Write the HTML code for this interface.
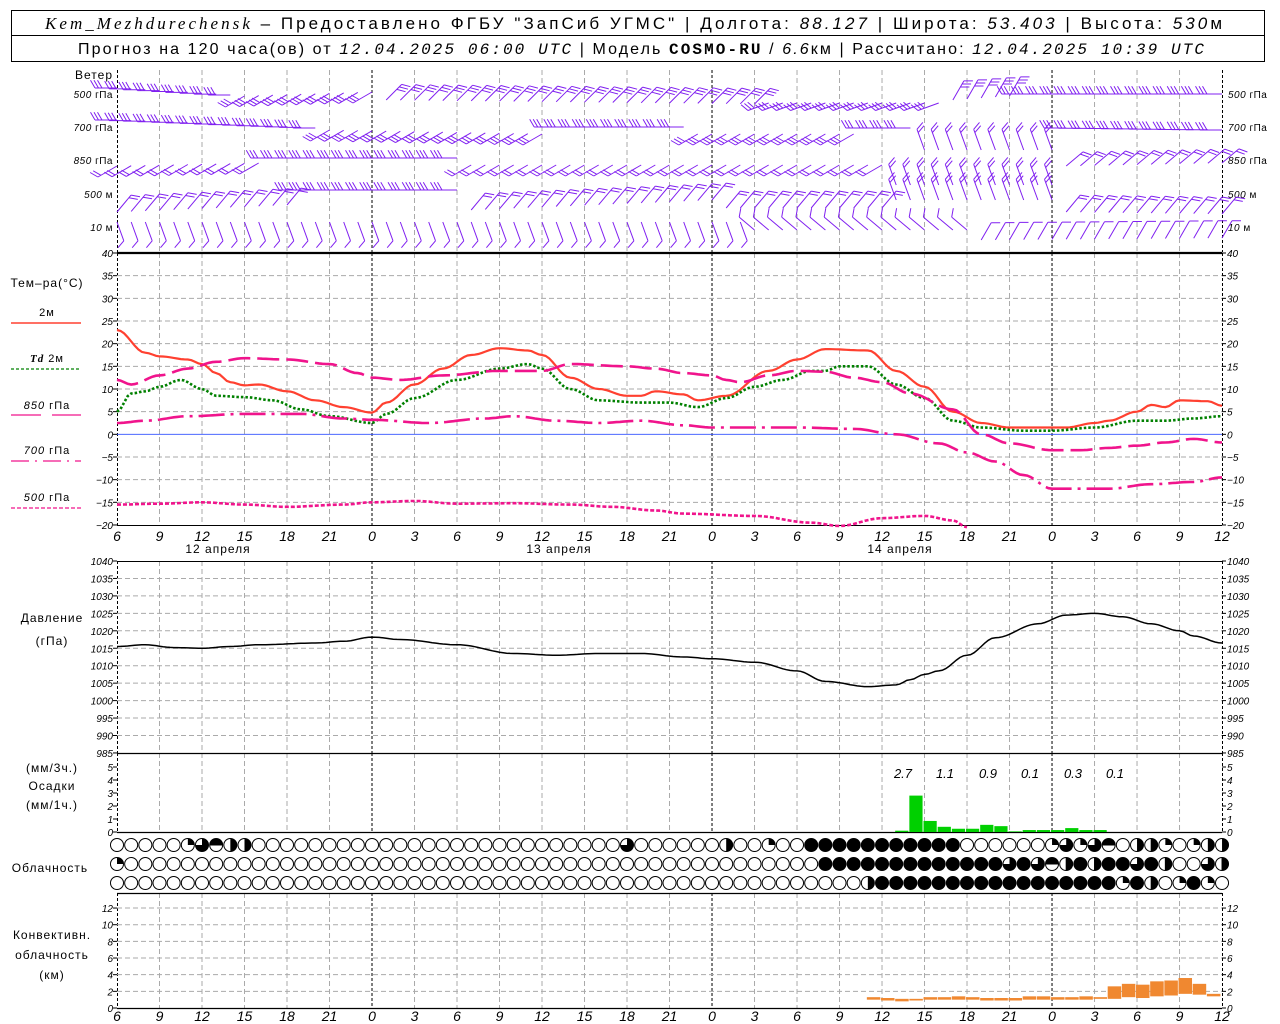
<!DOCTYPE html>
<html><head><meta charset="utf-8"><style>
html,body{margin:0;padding:0;background:#fff;width:1280px;height:1024px;overflow:hidden}
svg{display:block}
text{font-family:"Liberation Sans",sans-serif}
.it{font-style:italic;font-size:10px}
.lb{font-size:12px;letter-spacing:1px}
</style></head><body>
<svg id="s" width="1280" height="1024" xmlns="http://www.w3.org/2000/svg">
<rect x="11.5" y="10.5" width="1253" height="51" fill="none" stroke="#000"/>
<line x1="11" y1="35.5" x2="1265" y2="35.5" stroke="#000"/>
<text x="45" y="29" font-size="17" textLength="1177" lengthAdjust="spacing"><tspan font-family="Liberation Serif" font-style="italic">Kem_Mezhdurechensk</tspan> – Предоставлено ФГБУ "ЗапСиб УГМС" | Долгота: <tspan font-style="italic">88.127</tspan> | Широта: <tspan font-style="italic">53.403</tspan> | Высота: <tspan font-style="italic">530</tspan>м</text>
<text x="78" y="54" font-size="16" textLength="1126" lengthAdjust="spacing">Прогноз на 120 часа(ов) от <tspan font-family="Liberation Mono" font-style="italic">12.04.2025 06:00 UTC</tspan>  | Модель <tspan font-family="Liberation Mono" font-weight="bold">COSMO-RU</tspan> / <tspan font-style="italic">6.6</tspan>км | Рассчитано: <tspan font-family="Liberation Mono" font-style="italic">12.04.2025 10:39 UTC</tspan></text>
<g class="lb">
<text x="113" y="79" text-anchor="end">Ветер</text>
<text x="47" y="287" text-anchor="middle">Тем–ра(°C)</text>
<text x="47" y="316" text-anchor="middle" font-size="11">2м</text>
<text x="47" y="362" text-anchor="middle" font-size="11"><tspan font-style="italic" font-weight="bold" font-family="Liberation Serif">Td</tspan>  2м</text>
<text x="47" y="409" text-anchor="middle" font-size="11"><tspan font-style="italic">850</tspan> гПа</text>
<text x="47" y="454" text-anchor="middle" font-size="11"><tspan font-style="italic">700</tspan> гПа</text>
<text x="47" y="501" text-anchor="middle" font-size="11"><tspan font-style="italic">500</tspan> гПа</text>
<text x="52" y="622" text-anchor="middle">Давление</text>
<text x="52" y="645" text-anchor="middle">(гПа)</text>
<text x="52" y="772" text-anchor="middle">(мм/3ч.)</text>
<text x="52" y="790" text-anchor="middle">Осадки</text>
<text x="52" y="809" text-anchor="middle">(мм/1ч.)</text>
<text x="50" y="872" text-anchor="middle">Облачность</text>
<text x="52" y="939" text-anchor="middle">Конвективн.</text>
<text x="52" y="959" text-anchor="middle">облачность</text>
<text x="52" y="979" text-anchor="middle">(км)</text>
</g>
<line x1="11" y1="323" x2="81" y2="323" stroke="#ff4030" stroke-width="1.5"/>
<line x1="11" y1="369" x2="81" y2="369" stroke="#008000" stroke-width="1.2" stroke-dasharray="3,2"/>
<line x1="11" y1="415" x2="41" y2="415" stroke="#f0148c" stroke-width="1.2"/><line x1="52" y1="415" x2="81" y2="415" stroke="#f0148c" stroke-width="1.2"/>
<line x1="11" y1="461" x2="81" y2="461" stroke="#f0148c" stroke-width="1.2" stroke-dasharray="18,6,2,6"/>
<line x1="11" y1="508" x2="81" y2="508" stroke="#f0148c" stroke-width="1.2" stroke-dasharray="4,2"/>
<g id="g"></g>
</svg>
<script>
(function(){
var NS="http://www.w3.org/2000/svg",g=document.getElementById('g');
function X(h){return 117+h*14.167;}
function el(t,a,txt){var e=document.createElementNS(NS,t);for(var k in a)e.setAttribute(k,a[k]);if(txt!=null)e.textContent=txt;g.appendChild(e);return e;}
function ln(x1,y1,x2,y2,c,w,d){var a={x1:x1,y1:y1,x2:x2,y2:y2,stroke:c,'stroke-width':w||1};if(d)a['stroke-dasharray']=d;return el('line',a);}
function tx(x,y,s,anc,cls){return el('text',{x:x,y:y,'text-anchor':anc||'start','class':cls||'it'},s);}
var panels=[[70,252],[253,525],[561,753],[753,832],[893,1008]];
panels.forEach(function(p){
 for(var h=3;h<78;h+=3){var mid=(h==18||h==42||h==66);ln(X(h),p[0],X(h),p[1],mid?'#000':'#aaa',1,mid?'3,2':'5,3');}
 ln(117.5,p[0],117.5,p[1],'#000',1,'3,2');ln(1222.5,p[0],1222.5,p[1],'#000',1,'3,2');
});
function TY(t){return 253+(40-t)*4.533;}
for(var t=40;t>=-20;t-=5){var y=TY(t);
 if(t<40&&t>-20&&t!=0)ln(117,y,1222,y,'#aaa',1,'5,3');
 tx(113,y+4,String(t).replace('-','−'),'end');tx(1227,y+4,String(t).replace('-','−'));
 ln(113,y,117,y,'#000');ln(1222,y,1226,y,'#000');}
ln(117,TY(0),1222,TY(0),'#3050ff',0.8);
ln(117,253.5,1222,253.5,'#000',1.2);ln(117,525.5,1222,525.5,'#000',1);
function PY(p){return 561+(1040-p)*3.49;}
for(var p=1040;p>=985;p-=5){var y=PY(p);
 if(p<1040&&p>985)ln(117,y,1222,y,'#aaa',1,'5,3');
 tx(113,y+4,p,'end');tx(1227,y+4,p);ln(113,y,117,y,'#000');ln(1222,y,1226,y,'#000');}
ln(117,561.5,1222,561.5,'#000',1);ln(117,753.5,1222,753.5,'#000',1.2);
function RY(v){return 832-v*13;}
for(var v=0;v<=5;v++){var y=RY(v);tx(113,y+4,v,'end');tx(1227,y+4,v);ln(113,y,117,y,'#000');ln(1222,y,1226,y,'#000');}
ln(117,832.5,1222,832.5,'#000',1.2);
function CY(k){return 1008-k*8.33;}
for(var k=0;k<=12;k+=2){var y=CY(k);if(k>0)ln(117,y,1222,y,'#aaa',1,'5,3');
 tx(113,y+4,k,'end');tx(1227,y+4,k);ln(113,y,117,y,'#000');ln(1222,y,1226,y,'#000');}
ln(117,893.5,1222,893.5,'#000',1.2);ln(117,1008.5,1222,1008.5,'#000',1.2);
ln(117,252.5,1222,252.5,'#000',1.2);
var lab=[6,9,12,15,18,21,0,3];
for(var h=0;h<=78;h+=3){var s=lab[(h/3)%8];
 el('text',{x:X(h),y:541,'text-anchor':'middle','font-style':'italic','font-size':'14'},s);
 el('text',{x:X(h),y:1021,'text-anchor':'middle','font-style':'italic','font-size':'14'},s);}
[[218,'12 апреля'],[559,'13 апреля'],[900,'14 апреля']].forEach(function(d){el('text',{x:d[0],y:553,'text-anchor':'middle','font-size':'12','letter-spacing':'1'},d[1]);});
[['500 гПа',98],['700 гПа',131],['850 гПа',164],['500 м',198],['10   м',231]].forEach(function(w){
 var a=w[0].split(' ');
 var t1=el('text',{x:113,y:w[1],'text-anchor':'end','font-size':'10','letter-spacing':'0.5'});t1.innerHTML='<tspan font-style="italic">'+a[0]+'</tspan> '+w[0].slice(a[0].length+1);
 var t2=el('text',{x:1228,y:w[1],'font-size':'10','letter-spacing':'0.5'});t2.innerHTML='<tspan font-style="italic">'+a[0]+'</tspan> '+w[0].slice(a[0].length+1);
});
function interp(kf,h){for(var i=0;i<kf.length-1;i++){if(h>=kf[i][0]&&h<=kf[i+1][0]){var a=kf[i],b=kf[i+1],f=(h-a[0])/(b[0]-a[0]);f=(1-Math.cos(f*Math.PI))/2;return a[1]+(b[1]-a[1])*f;}}return null;}
function curve(kf,fy,c,w,d,h0,h1){var pts=[];for(var h=h0;h<=h1;h+=0.25){var v=interp(kf,h);if(v!=null)pts.push(X(h).toFixed(1)+','+fy(v).toFixed(1));}
 var a={points:pts.join(' '),fill:'none',stroke:c,'stroke-width':w};if(d)a['stroke-dasharray']=d;el('polyline',a);}
var MG='#f0148c';
curve([[0,23],[2,18],[3,17.2],[5,16.5],[6,15.5],[7,13.5],[8,11.5],[9,10.8],[10,11],[12,9.5],[14,7.5],[16,6],[18,4.8],[19,7],[21,11],[23,14.5],[25,17.5],[27,19],[29,18.5],[30,17.5],[32,12.5],[34,10],[36,8.5],[37,8.5],[38,9.5],[40,8.8],[41,7.5],[43,8.5],[46,14],[48,16.5],[50,18.8],[53,18.5],[55,14],[57,10.5],[59,5],[61,2.5],[63,1.5],[67,1.5],[69,2.5],[70,3],[72,5],[73,6.5],[74,6],[75,7.5],[77,7.3],[78,6.3]],TY,'#ff4030',2.2,null,0,78);
curve([[0,5],[1,9],[2,9.5],[3,10.5],[4.5,12],[6,10],[7,8.5],[9,8.2],[11,7.5],[13,5.5],[15,4],[18,2.5],[19,4.5],[21,8],[24,12],[27,14.5],[29,15.5],[30,14.5],[32,10],[34,7.5],[37,7],[39,7],[41,6],[43,8],[45,10.5],[47,12],[49,14],[50,14],[51,15],[53,15],[55,11],[57,8],[59,3],[61,1.5],[64,0.8],[66,0.8],[69,1.5],[72,3],[74,3],[76,3.5],[78,4]],TY,'#008000',2.6,'2.5,2',0,78);
curve([[0,12],[1,11],[3,13],[5,14.5],[7,16],[9,16.8],[12,16.5],[15,15.5],[17,13.5],[18,12.5],[20,12],[23,13],[27,14],[30,14],[32,15.5],[36,15],[38,14.5],[40,13.5],[42,13],[43,12],[44,11.5],[46,13],[48,14],[50,13.8],[52,12.5],[54,11.5],[56,9],[59,5.5],[61,0],[63,-2],[66,-3.5],[68,-3.5],[70,-3],[72,-2.5],[74,-1.8],[76,-1],[78,-1.8]],TY,MG,2.6,'22,7',0,78);
curve([[0,2.5],[2,3],[5,4],[9,4.5],[13,4.5],[16,3.5],[18,3.2],[22,2.5],[26,3.5],[28,4],[31,3],[34,2.5],[37,3],[40,2],[42,1.5],[48,1.5],[52,1.2],[55,0],[58,-2],[60,-4],[62,-6],[64,-9],[66,-12],[70,-12],[73,-11],[76,-10.5],[78,-9.5]],TY,MG,2.6,'26,6,3,6',0,78);
curve([[0,-15.5],[3,-15.3],[6,-15],[9,-15.5],[12,-16],[16,-15.5],[18,-15],[21,-14.7],[24,-15.3],[28,-15.2],[32,-15.5],[35,-16],[38,-16.8],[40,-17.5],[45,-18],[49,-19.5],[51,-20.2],[54,-18.5],[57,-18],[59,-19],[60,-20.5]],TY,MG,2.6,'4,2',0,60);
curve([[0,1015.5],[2,1016],[4,1015.2],[6,1015],[8,1015.5],[10,1016],[14,1016.5],[16,1017],[18,1018.2],[20,1017.5],[24,1016],[28,1013.5],[31,1013],[34,1013.5],[37,1013.5],[40,1012.5],[42,1012],[45,1011],[48,1008.5],[50,1005.5],[53,1004],[55,1004.5],[56,1006],[57,1007.5],[58,1008.5],[60,1013],[62,1018],[65,1022],[67,1024.5],[69,1025],[71,1024],[73,1022],[75,1020],[76,1018.5],[78,1016.5]],PY,'#000',1.5,null,0,78);
var pr=[[55,0.1],[56,2.8],[57,0.85],[58,0.4],[59,0.25],[60,0.25],[61,0.55],[62,0.45],[63,0.05],[64,0.15],[65,0.15],[66,0.15],[67,0.3],[68,0.15],[69,0.15]];
pr.forEach(function(b){el('rect',{x:X(b[0])-1,y:RY(b[1]),width:13.2,height:b[1]*13,fill:'#00d000'});});
[[903,'2.7'],[945,'1.1'],[988,'0.9'],[1030,'0.1'],[1073,'0.3'],[1115,'0.1']].forEach(function(p){el('text',{x:p[0],y:778,'text-anchor':'middle','font-style':'italic','font-size':'13'},p[1]);});
function row(spec){var a=[];for(var i=0;i<79;i++)a.push('0');spec.forEach(function(s){for(var i=s[0];i<=s[1];i++)a[i]=s[2];});return a;}
var r1=row([[5,5,'1'],[6,6,'3'],[7,7,'h'],[8,9,'2'],[36,36,'3'],[43,43,'2'],[46,46,'1'],[49,59,'4'],[66,66,'1'],[67,67,'3'],[68,68,'1'],[69,69,'3'],[70,70,'h'],[72,72,'2'],[73,73,'v'],[74,74,'1'],[76,76,'1'],[77,77,'2'],[78,78,'2']]);
var r2=row([[0,0,'1'],[50,78,'4'],[63,63,'3'],[65,65,'3'],[66,66,'h'],[67,67,'v'],[69,69,'v'],[72,72,'3'],[74,74,'v'],[75,76,'0'],[77,77,'3'],[78,78,'v']]);
var r3=row([[53,53,'2'],[54,78,'4'],[71,71,'1'],[73,73,'v'],[74,74,'0'],[75,75,'1'],[77,77,'1'],[78,78,'0']]);
function circ(cx,cy,t){var r=6.5;
 el('circle',{cx:cx,cy:cy,r:r,fill:t=='4'?'#000':'#fff',stroke:'#000','stroke-width':1});
 var d=null;
 if(t=='1')d='M'+cx+','+cy+'V'+(cy-r)+'A'+r+','+r+' 0 0 1 '+(cx+r)+','+cy+'Z';
 if(t=='2'||t=='v')d='M'+cx+','+(cy-r)+'A'+r+','+r+' 0 0 1 '+cx+','+(cy+r)+'Z';
 if(t=='3')d='M'+cx+','+cy+'V'+(cy-r)+'A'+r+','+r+' 0 1 1 '+(cx-r)+','+cy+'Z';
 if(t=='h')d='M'+(cx-r)+','+cy+'A'+r+','+r+' 0 0 1 '+(cx+r)+','+cy+'Z';
 if(d)el('path',{d:d,fill:'#000'});
 if(t=='v'||t=='h')ln(t=='v'?cx:cx-r,t=='v'?cy-r:cy,t=='v'?cx:cx+r,t=='v'?cy+r:cy,'#000',1);}
for(var i=0;i<79;i++){circ(X(i),845,r1[i]);circ(X(i),864,r2[i]);circ(X(i),883,r3[i]);}
var cv=[[53,1.0,1.3],[54,0.9,1.2],[55,0.8,1.1],[56,0.9,1.1],[57,1.0,1.3],[58,1.0,1.3],[59,1.0,1.4],[60,1.0,1.3],[61,0.9,1.2],[62,0.9,1.2],[63,0.9,1.2],[64,1.0,1.4],[65,1.0,1.4],[66,1.0,1.3],[67,1.0,1.3],[68,1.0,1.4],[69,1.1,1.3],[70,1.1,2.6],[71,1.3,2.9],[72,1.2,2.8],[73,1.4,3.2],[74,1.5,3.3],[75,1.7,3.6],[76,1.6,2.9],[77,1.4,1.7]];
cv.forEach(function(b){el('rect',{x:X(b[0])-1,y:CY(b[2]),width:13.5,height:(b[2]-b[1])*8.33,fill:'#f08830'});});
var PU='#8020f0';
function barb(x,y,a,n,L){L=L||22;var r=a*Math.PI/180,ex=x+L*Math.cos(r),ey=y+L*Math.sin(r);
 var d='M'+x.toFixed(1)+','+y.toFixed(1)+'L'+ex.toFixed(1)+','+ey.toFixed(1);
 var br=r+Math.PI/3;
 for(var k=0;k<n;k++){var bx=ex-k*3.5*Math.cos(r),by=ey-k*3.5*Math.sin(r);
  d+='M'+bx.toFixed(1)+','+by.toFixed(1)+'l'+(9*Math.cos(br)).toFixed(1)+','+(9*Math.sin(br)).toFixed(1);}
 el('path',{d:d,stroke:PU,'stroke-width':1,fill:'none'});}
function wrow(segs){for(var h=0;h<=78;h++){for(var i=0;i<segs.length;i++){var s=segs[i];if(h>=s[0]&&h<=s[1]){var f=(h-s[0])/Math.max(1,(s[1]-s[0]));barb(X(h),s[2]+(s[3]-s[2])*f,s[4],s[5],s[6]);break;}}}}
wrow([[0,8,88,95,180,3],[9,18,96,92,150,3],[19,45,100,104,-45,3],[46,58,103,103,160,3],[59,63,100,96,-60,3],[64,78,94,94,180,3]]);
wrow([[0,14,120,128,180,3],[15,30,130,134,150,3],[31,40,127,127,180,3],[41,52,134,134,150,3],[53,56,128,128,180,3],[57,66,150,150,-110,2],[67,78,128,130,180,3]]);
wrow([[0,10,166,163,150,2],[11,24,158,158,180,3],[25,54,165,165,150,2],[55,66,185,185,-110,2],[67,78,166,163,-40,2]]);
wrow([[0,12,212,205,-50,2],[13,24,190,190,180,3],[25,42,210,200,-50,2],[43,54,208,208,-50,2],[55,66,200,200,-110,2],[67,78,212,214,-50,2]]);
wrow([[0,44,222,222,70,1,20],[45,60,230,230,-140,1,20],[61,78,240,238,-60,1,20]]);
})();
</script>
</body></html>
